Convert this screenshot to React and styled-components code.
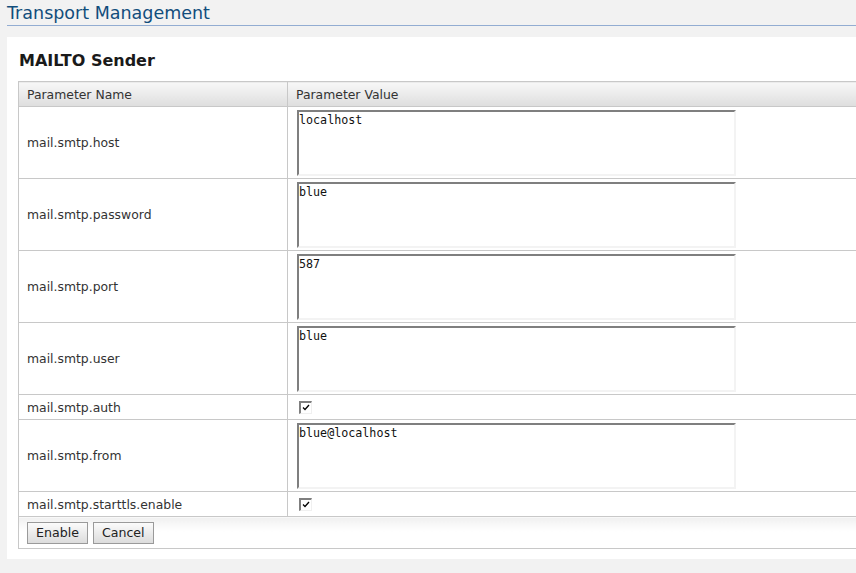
import React from "react";
import styled, { createGlobalStyle } from "styled-components";

const Global = createGlobalStyle`
  html, body { margin: 0; padding: 0; overflow: hidden; background: #f2f2f2; }
  body { font-family: "DejaVu Sans", Verdana, sans-serif; }
`;

const Page = styled.div`
  width: 1000px;
  padding: 0 0 0 7px;
`;

const TitleBar = styled.div`
  height: 25px;
  border-bottom: 1px solid #93add2;
  display: flex;
  align-items: flex-end;
`;

const Title = styled.h1`
  margin: 0 0 1px 0;
  font-size: 17.5px;
  font-weight: normal;
  line-height: 21px;
  color: #114d7c;
`;

const Panel = styled.div`
  margin-top: 11px;
  background: #fff;
  padding: 12px 11px 10px 11px;
`;

const Heading = styled.h2`
  margin: 1px 0 9px 1px;
  font-size: 16px;
  font-weight: bold;
  line-height: 22px;
  color: #1a1a1a;
`;

const Table = styled.table`
  width: 940px;
  border-collapse: collapse;
  border: 1px solid #c8c8c8;
  font-size: 12.4px;
  color: #333;
`;

const Th = styled.th`
  height: 24px;
  padding: 0 8px;
  text-align: left;
  font-weight: normal;
  background: linear-gradient(#f7f7f7, #dedede);
  border: 1px solid #c8c8c8;
  width: ${(p) => p.$w || "auto"};
`;

const Td = styled.td`
  padding: 0 8px;
  border: 1px solid #c8c8c8;
  height: ${(p) => p.$h}px;
  vertical-align: middle;
`;

const ValueTd = styled.td`
  padding: 0 9px;
  border: 1px solid #c8c8c8;
  vertical-align: middle;
`;

const Area = styled.div`
  box-sizing: border-box;
  width: 439px;
  height: 66px;
  margin: 3px 0 2px 0;
  border-style: solid;
  border-width: 2px;
  border-color: #7f7f7f #f3f3f3 #f3f3f3 #7f7f7f;
  padding: 1px 0;
  font-family: "DejaVu Sans Mono", monospace;
  font-size: 11.7px;
  line-height: 15px;
  color: #111;
  background: #fff;
`;

const Check = styled.span`
  box-sizing: border-box;
  display: flex;
  align-items: center;
  justify-content: center;
  width: 13px;
  height: 13px;
  margin-left: 2px;
  border-style: solid;
  border-width: 2px 1px 1px 2px;
  border-color: #7f7f7f #f0f0f0 #f0f0f0 #7f7f7f;
  background: #fff;
`;

const FooterTd = styled.td`
  height: 31px;
  padding: 0 8px;
  background: linear-gradient(#f0f0f0, #fff 14px);
  border: 1px solid #c8c8c8;
`;

const Buttons = styled.div`
  display: flex;
  gap: 5px;
`;

const Button = styled.button`
  height: 22px;
  padding: 0 8px;
  font-family: "DejaVu Sans", Verdana, sans-serif;
  font-size: 12.6px;
  color: #222;
  background: linear-gradient(#fbfbfb, #dcdcdc);
  border: 1px solid #9a9a9a;
  border-radius: 0;
`;

const rows = [
  { name: "mail.smtp.host", value: "localhost" },
  { name: "mail.smtp.password", value: "blue" },
  { name: "mail.smtp.port", value: "587" },
  { name: "mail.smtp.user", value: "blue" },
  { name: "mail.smtp.auth", check: true },
  { name: "mail.smtp.from", value: "blue@localhost" },
  { name: "mail.smtp.starttls.enable", check: true },
];

function CheckBox() {
  return (
    <Check>
      <svg width="8" height="7" viewBox="0 0 8 7">
        <path d="M1 3.5 L3 5.5 L7 1" fill="none" stroke="#000" strokeWidth="1.3" />
      </svg>
    </Check>
  );
}

export default function App() {
  return (
    <>
      <Global />
      <Page>
        <TitleBar>
          <Title>Transport Management</Title>
        </TitleBar>
        <Panel>
          <Heading>MAILTO Sender</Heading>
          <Table>
            <thead>
              <tr>
                <Th $w="252px">Parameter Name</Th>
                <Th>Parameter Value</Th>
              </tr>
            </thead>
            <tbody>
              {rows.map((r) => (
                <tr key={r.name}>
                  <Td $h={r.check ? 24 : 71}>{r.name}</Td>
                  <ValueTd>{r.check ? <CheckBox /> : <Area>{r.value}</Area>}</ValueTd>
                </tr>
              ))}
              <tr>
                <FooterTd colSpan={2}>
                  <Buttons>
                    <Button>Enable</Button>
                    <Button>Cancel</Button>
                  </Buttons>
                </FooterTd>
              </tr>
            </tbody>
          </Table>
        </Panel>
      </Page>
    </>
  );
}
